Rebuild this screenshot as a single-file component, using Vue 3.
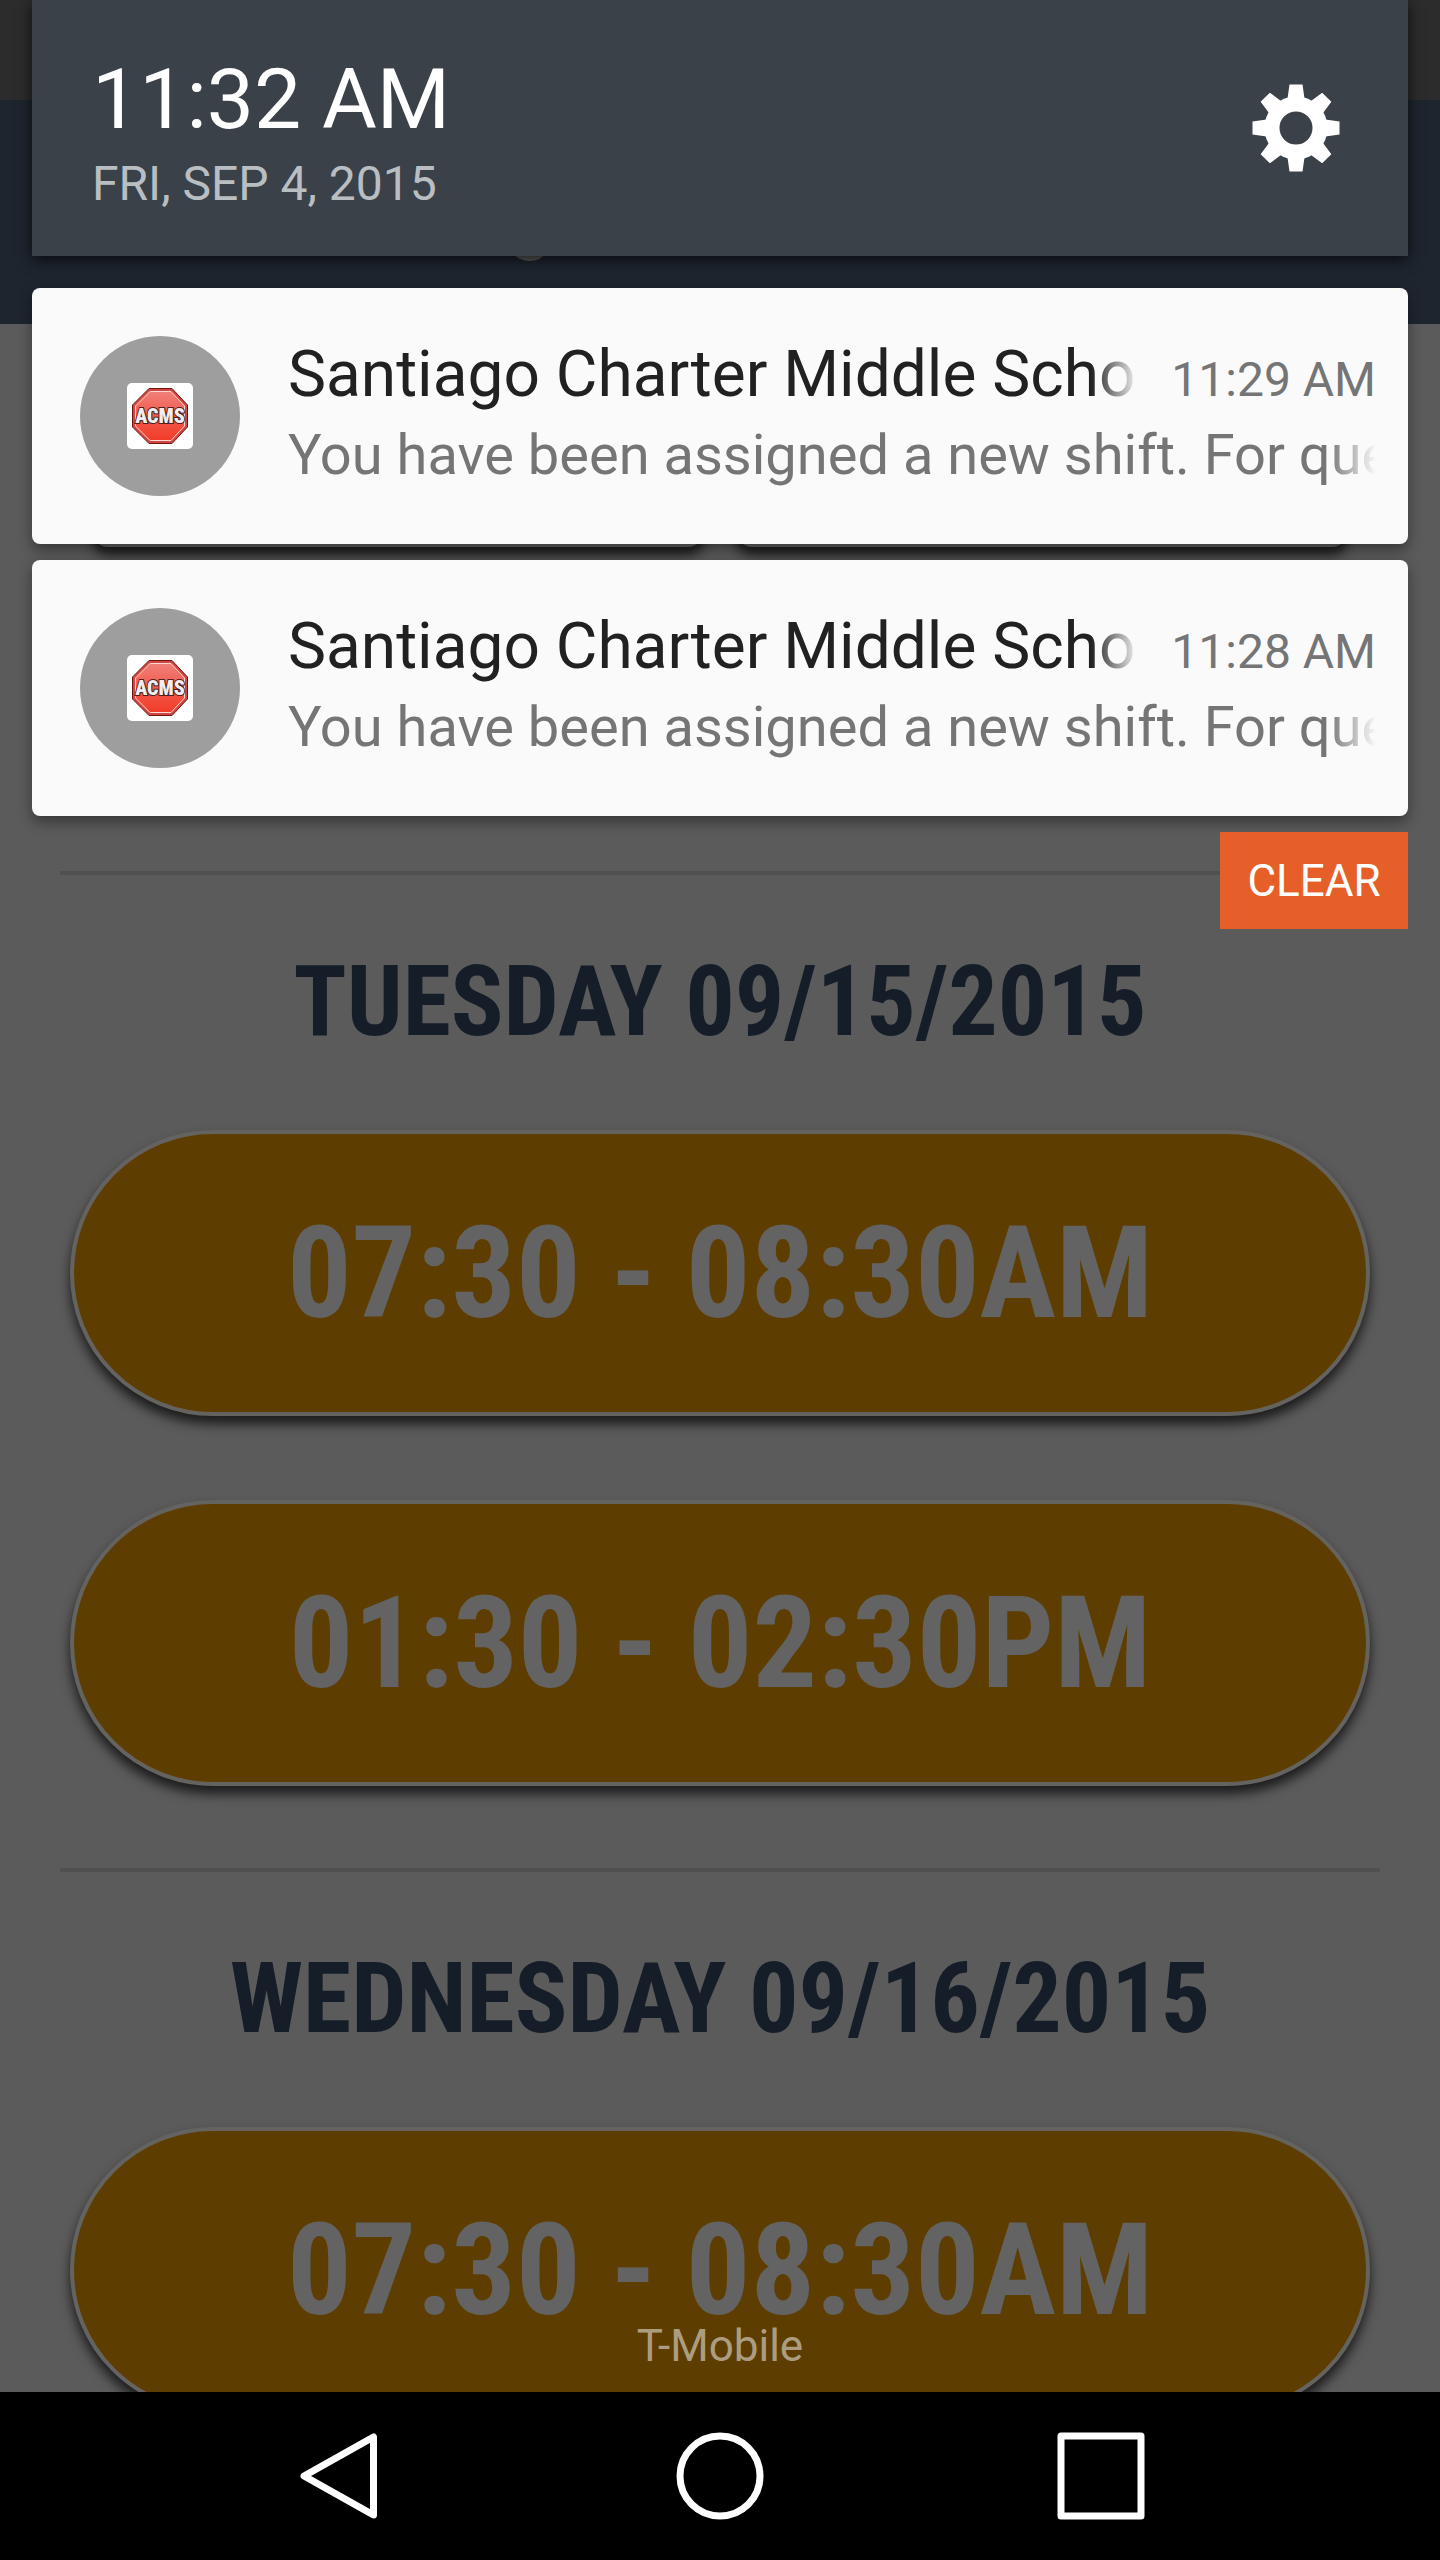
<template>
  <div class="screen">
    <!-- schedule page behind the shade -->
    <main class="page">
      <div class="status-bar"></div>
      <header class="app-bar">
        <h1>g</h1>
      </header>
      <div class="tabs">
        <span class="tab"></span>
        <span class="tab"></span>
      </div>

      <section v-for="day in days" :key="day.title" class="day">
        <h2>{{ day.title }}</h2>
        <div class="shifts">
          <button v-for="shift in day.shifts" :key="shift" class="shift">{{ shift }}</button>
        </div>
      </section>
    </main>

    <!-- notification shade -->
    <aside class="shade">
      <header class="shade-header">
        <div>
          <div class="clock">11:32 AM</div>
          <div class="date">FRI, SEP 4, 2015</div>
        </div>
        <button class="settings" aria-label="Settings">
          <svg width="88" height="88" viewBox="-44 -44 88 88" fill="#fff">
            <circle r="24" fill="none" stroke="#fff" stroke-width="15" />
            <path
              v-for="n in 8"
              :key="n"
              d="M-6.5-43.5H6.5L9-26H-9Z"
              :transform="`rotate(${n * 45})`"
            />
          </svg>
        </button>
      </header>

      <article v-for="item in notifications" :key="item.time" class="card">
        <div class="avatar">
          <svg width="66" height="66" viewBox="0 0 66 66">
            <defs>
              <linearGradient id="signFill" x1="0" y1="0" x2="0" y2="1">
                <stop offset="0" stop-color="#f08078" />
                <stop offset="0.5" stop-color="#f25a4e" />
                <stop offset="1" stop-color="#f23c28" />
              </linearGradient>
            </defs>
            <rect width="66" height="66" rx="5" fill="#fff" />
            <path
              d="M22 5.500H45L60.500 22V44L45 60.500H22L5.500 44V22Z"
              fill="#d2473f"
              stroke="#6e1712"
              stroke-width="1"
            />
            <path
              d="M23 8.500H44L57.500 23V43L44 57.500H23L8.500 43V23Z"
              fill="url(#signFill)"
              stroke="#ffd9d2"
              stroke-width="1"
            />
            <text x="33" y="40" class="sign-text">ACMS</text>
          </svg>
        </div>
        <div class="card-body">
          <div class="card-top">
            <h3 class="card-title">{{ item.title }}</h3>
            <time class="card-time">{{ item.time }}</time>
          </div>
          <p class="card-text">{{ item.text }}</p>
        </div>
      </article>

      <button class="clear" @click="clearAll">CLEAR</button>
    </aside>

    <div class="carrier">T-Mobile</div>

    <!-- system navigation -->
    <nav class="nav-bar">
      <button class="nav-btn" aria-label="Back">
        <svg width="88" height="88" viewBox="0 0 88 88">
          <path d="M78.500 5V83L9 44Z" />
        </svg>
      </button>
      <button class="nav-btn" aria-label="Home">
        <svg width="88" height="88" viewBox="0 0 88 88">
          <circle cx="44" cy="44" r="40" />
        </svg>
      </button>
      <button class="nav-btn" aria-label="Recent apps">
        <svg width="88" height="88" viewBox="0 0 88 88">
          <rect x="4" y="4" width="80" height="80" />
        </svg>
      </button>
    </nav>
  </div>
</template>

<script setup>
import { ref } from "vue";

const days = [
  { title: "TUESDAY 09/15/2015", shifts: ["07:30 - 08:30AM", "01:30 - 02:30PM"] },
  { title: "WEDNESDAY 09/16/2015", shifts: ["07:30 - 08:30AM"] }
];

const notifications = ref([
  {
    title: "Santiago Charter Middle School",
    text: "You have been assigned a new shift. For questions",
    time: "11:29 AM"
  },
  {
    title: "Santiago Charter Middle School",
    text: "You have been assigned a new shift. For questions",
    time: "11:28 AM"
  }
]);

const clearAll = () => {
  notifications.value = [];
};
</script>

<style>
body {
  margin: 0;
  background: #000;
}
</style>

<style scoped>
.screen {
  position: relative;
  height: 100vh;
  display: flex;
  flex-direction: column;
  overflow: hidden;
  font-family: Roboto, "Liberation Sans", sans-serif;
}

.screen * {
  box-sizing: border-box;
}

button {
  border: none;
  padding: 0;
  font-family: inherit;
  cursor: pointer;
}

h1,
h2,
h3,
p {
  margin: 0;
}

svg {
  display: block;
}

/* schedule page */
.page {
  flex: 1;
  min-height: 0;
  overflow: hidden;
  background: #5b5b5b;
}

.status-bar {
  height: 100px;
  background: #2c2c2c;
}

.app-bar {
  height: 224px;
  padding: 70px 508px 0;
  background: #1e252f;
}

.app-bar h1 {
  font-size: 80px;
  line-height: 94px;
  font-weight: 500;
  color: #5b5b5b;
}

.tabs {
  display: grid;
  grid-template-columns: 1fr 1fr;
  gap: 32px;
  height: 547px;
  padding: 82px 92px 324px;
}

.tab {
  border-radius: 16px;
  background: #5e3e00;
  border: 4px solid #656360;
  box-shadow: 0 8px 12px rgba(0, 0, 0, 0.7);
}

.day {
  margin: 0 60px;
  padding: 67px 10px 82px;
  border-top: 4px solid #505050;
}

.day h2 {
  margin-bottom: 68px;
  font-family: "Roboto Condensed", "Liberation Sans Narrow", Roboto, sans-serif;
  font-size: 98px;
  line-height: 120px;
  font-weight: 700;
  text-align: center;
  white-space: nowrap;
  color: #151d29;
}

.shifts {
  display: flex;
  flex-direction: column;
  gap: 84px;
}

.shift {
  height: 286px;
  border: 4px solid #656360;
  border-radius: 143px;
  background: #5e3e00;
  box-shadow: 0 8px 12px rgba(0, 0, 0, 0.7);
  font-family: "Roboto Condensed", "Liberation Sans Narrow", Roboto, sans-serif;
  font-size: 128px;
  font-weight: 700;
  white-space: nowrap;
  color: #636363;
}

/* notification shade */
.shade {
  position: absolute;
  top: 0;
  left: 32px;
  right: 32px;
  display: flex;
  flex-direction: column;
  gap: 16px;
}

.shade-header {
  display: flex;
  justify-content: space-between;
  height: 256px;
  margin-bottom: 16px;
  padding: 52px 68px 0 60px;
  background: #3b4149;
  box-shadow: 0 4px 14px rgba(0, 0, 0, 0.7);
}

.clock {
  font-size: 84px;
  line-height: 96px;
  color: #fff;
}

.date {
  margin-top: 8px;
  font-size: 48px;
  line-height: 56px;
  color: #b9bec3;
}

.settings {
  align-self: flex-start;
  margin-top: 32px;
  background: none;
}

.card {
  display: flex;
  gap: 48px;
  padding: 48px 32px 48px 48px;
  border-radius: 8px;
  background: #fafafa;
  box-shadow: 0 6px 14px rgba(0, 0, 0, 0.4);
}

.avatar {
  flex: none;
  display: flex;
  align-items: center;
  justify-content: center;
  width: 160px;
  height: 160px;
  border-radius: 50%;
  background: #9e9e9e;
}

.sign-text {
  font-family: "Roboto Condensed", Roboto, sans-serif;
  font-size: 20px;
  font-weight: 900;
  text-anchor: middle;
  fill: #f0eeee;
  stroke: #4a2020;
  stroke-width: 2px;
  paint-order: stroke;
}

.card-body {
  flex: 1;
  min-width: 0;
}

.card-top {
  display: flex;
  align-items: baseline;
  gap: 32px;
}

.card-title,
.card-text {
  overflow: hidden;
  white-space: nowrap;
  font-weight: 400;
  mask-image: linear-gradient(to left, transparent, #000 48px);
}

.card-title {
  flex: 1;
  min-width: 0;
  font-size: 64px;
  line-height: 78px;
  color: #212121;
}

.card-time {
  font-size: 48px;
  color: #757575;
}

.card-text {
  margin-top: 8px;
  font-size: 56px;
  line-height: 66px;
  color: #757575;
}

.clear {
  align-self: flex-end;
  width: 188px;
  height: 97px;
  background: #e65f29;
  font-size: 44px;
  color: #fff;
}

/* carrier label floats over the page, just above the navigation bar */
.carrier {
  position: absolute;
  bottom: 188px;
  left: 0;
  right: 0;
  font-size: 44px;
  line-height: 52px;
  text-align: center;
  color: rgba(220, 215, 205, 0.65);
}

/* system navigation */
.nav-bar {
  flex: none;
  display: grid;
  grid-template-columns: repeat(3, 1fr);
  height: 168px;
  padding: 0 148px;
  background: #000;
}

.nav-btn {
  display: flex;
  align-items: center;
  justify-content: center;
  background: none;
}

.nav-btn svg {
  fill: none;
  stroke: #fff;
  stroke-width: 7px;
  stroke-linejoin: round;
}
</style>
